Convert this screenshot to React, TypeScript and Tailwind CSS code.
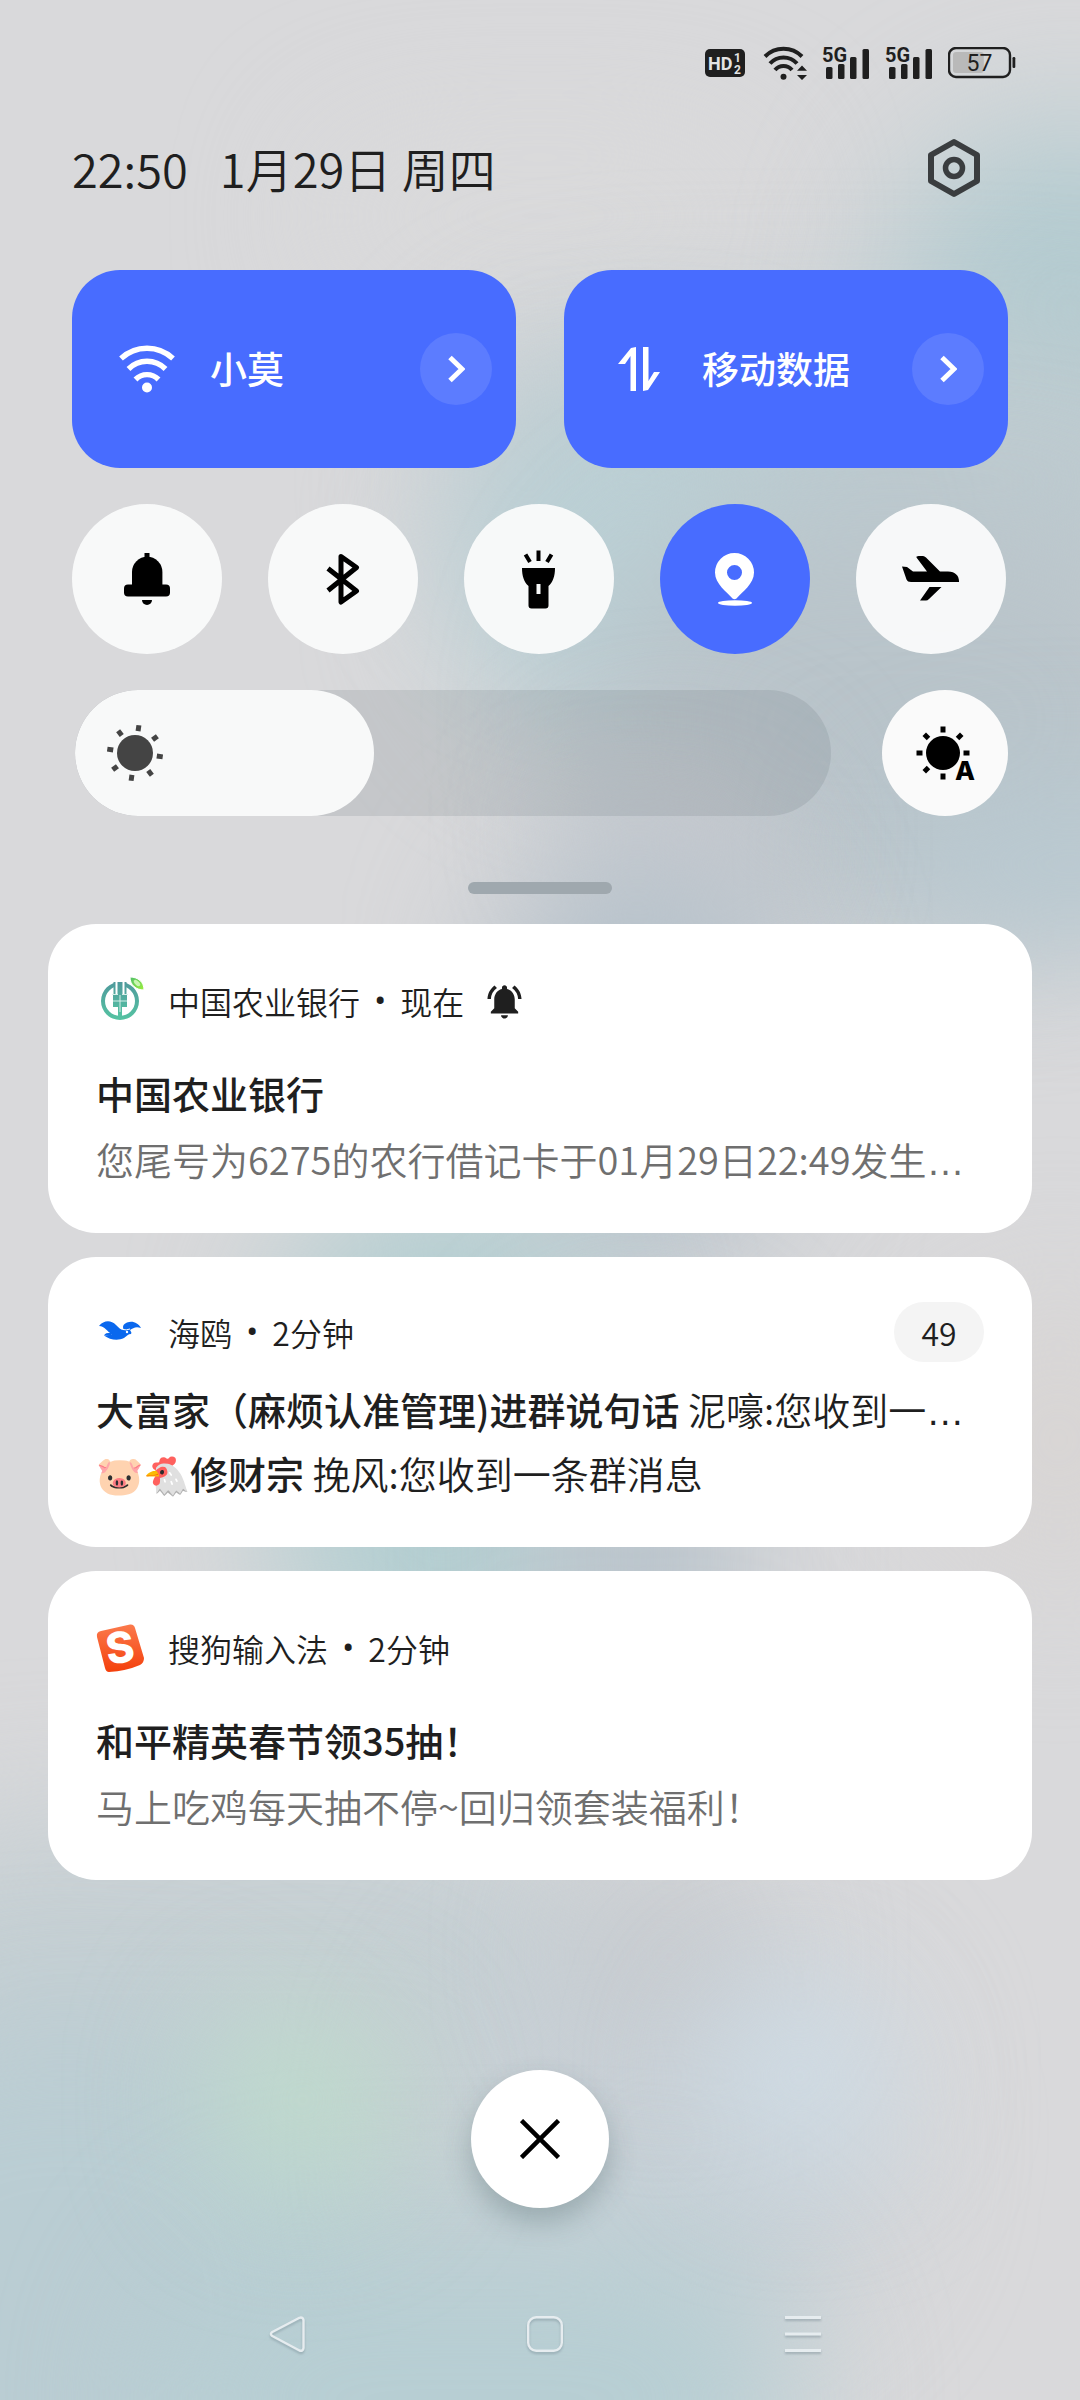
import { useState } from 'react';
import type { ReactNode } from 'react';
import { MdNotificationsActive } from 'react-icons/md';

/* ---------- wallpaper ---------- */

const BLOBS = [
  'left-[30%] top-[6%] h-[6%] w-[40%] bg-[#dadadb]',
  'right-[-16%] top-[5%] h-[16%] w-[34%] bg-[#b3cbd0]',
  'right-[-12%] top-[14%] h-[12%] w-[70%] bg-[#becbd0]',
  'left-[42%] top-[17%] h-[14%] w-[34%] bg-[#bbd1d6]',
  'right-[-12%] top-[21%] h-[18%] w-[58%] bg-[#b9c4ca]',
  'right-[-16%] top-[33%] h-[6%] w-[34%] bg-[#b8c9d1]',
  'left-[54%] top-[32%] h-[6%] w-[18%] bg-[#d0cdd2]',
  'left-[46%] top-[35%] h-[18%] w-[26%] bg-[#b5c1ca]',
  'right-[-10%] top-[54%] h-[12%] w-[24%] bg-[#d8d5d4]',
  'left-[26%] top-[49%] h-[22%] w-[30%] bg-[#b3ced1]',
  'left-[50%] top-[56%] h-[16%] w-[18%] bg-[#b9c3cb]',
  'left-[-20%] top-[76%] h-[20%] w-[80%] bg-[#c5cfd3]',
  'left-[-24%] top-[84%] h-[24%] w-[60%] bg-[#bacdd3]',
  'left-[40%] top-[80%] h-[18%] w-[42%] bg-[#c8d0d6]',
  'left-[14%] top-[93%] h-[14%] w-[60%] bg-[#b7ced3]',
  'left-[54%] top-[78%] h-[7%] w-[16%] bg-[#c6c9cd]',
  'left-[20%] top-[84%] h-[7%] w-[16%] bg-[#bfe0cb]',
  'left-[66%] top-[83%] h-[7%] w-[16%] bg-[#d2e0ea]',
];

function Wallpaper() {
  return (
    <div aria-hidden="true" className="absolute inset-0 -z-10 overflow-hidden bg-[#d9d9db]">
      {BLOBS.map((blob) => (
        <div key={blob} className={`absolute rounded-full blur-[70px] ${blob}`} />
      ))}
    </div>
  );
}

/* ---------- status bar ---------- */

function HdBadge() {
  return (
    <svg width="40" height="28" viewBox="0 0 40 28" aria-label="HD 1 2" role="img" className="mr-[3px]">
      <rect width="40" height="28" rx="5" fill="#1f1f1f" />
      <text x="3" y="21" fontSize="18" fontWeight="700" fill="#e4e4e4" className="font-['Roboto',sans-serif]">
        HD
      </text>
      <text x="29" y="13" fontSize="12" fontWeight="700" fill="#e4e4e4" className="font-['Roboto',sans-serif]">
        1
      </text>
      <text x="29" y="25" fontSize="12" fontWeight="700" fill="#e4e4e4" className="font-['Roboto',sans-serif]">
        2
      </text>
    </svg>
  );
}

function StatusWifi() {
  return (
    <svg width="44" height="34" viewBox="0 0 44 34" fill="none" stroke="#1f1f1f" strokeWidth="4" aria-label="Wi-Fi" role="img">
      <path d="M2 10.500A26 26 0 0 1 39 10.500" />
      <path d="M7 17.500A18 18 0 0 1 34 17.500" />
      <path d="M12 24A11 11 0 0 1 29 24" />
      <circle cx="20.500" cy="30.700" r="3" fill="#1f1f1f" stroke="none" />
      <path d="M39 19.500l5 5.300H34zM39 34l5-5H34z" fill="#1f1f1f" stroke="none" />
    </svg>
  );
}

function Signal() {
  return (
    <svg width="48" height="45" viewBox="0 -6 48 45" fill="#1f1f1f" aria-label="5G" role="img">
      <text x="0" y="15" fontSize="20" fontWeight="700" className="font-['Roboto',sans-serif]">
        5G
      </text>
      <rect x="4" y="20" width="6.500" height="12" rx="1.500" />
      <rect x="16" y="17" width="6.500" height="15" rx="1.500" />
      <rect x="28" y="10" width="6.500" height="22" rx="1.500" />
      <rect x="40.500" y="2" width="6.500" height="30" rx="1.500" />
    </svg>
  );
}

function Battery({ level }: { level: number }) {
  return (
    <svg width="68" height="32" viewBox="0 0 68 32" aria-label={`${level}%`} role="img">
      <rect x="1" y="1" width="61" height="29" rx="7" fill="none" stroke="#1f1f1f" strokeWidth="2.400" />
      <rect x="5" y="5" width={(54 * level) / 100} height="21" rx="3" fill="#b9b9b9" />
      <rect x="64.500" y="10" width="2.800" height="11" rx="1.200" fill="#1f1f1f" />
      <text x="31.500" y="23.500" textAnchor="middle" fontSize="23" fill="#1f1f1f" className="font-['Roboto',sans-serif]">
        {level}
      </text>
    </svg>
  );
}

function StatusBar() {
  return (
    <div className="flex h-[126px] items-center justify-end gap-[15px] pr-16">
      <HdBadge />
      <StatusWifi />
      <Signal />
      <Signal />
      <Battery level={57} />
    </div>
  );
}

/* ---------- quick settings ---------- */

function SettingsIcon() {
  return (
    <svg width="54" height="60" viewBox="0 0 54 60" fill="none" stroke="#3a3d3f" strokeWidth="6" strokeLinejoin="round">
      <path d="M27 4L50 17V43L27 56L4 43V17Z" />
      <circle cx="27" cy="30" r="8.500" strokeWidth="5.500" />
    </svg>
  );
}

function WifiIcon() {
  return (
    <svg width="56" height="48" viewBox="0 0 56 48" fill="none" stroke="#fff" strokeWidth="5.400">
      <path d="M2 13.500A38 38 0 0 1 54 13.500" />
      <path d="M9.500 24A26 26 0 0 1 46.500 24" />
      <path d="M16.500 34.500A16 16 0 0 1 39.500 34.500" />
      <circle cx="28" cy="42.500" r="5" fill="#fff" stroke="none" />
    </svg>
  );
}

function DataIcon() {
  return (
    <svg width="56" height="48" viewBox="0 0 56 48" fill="#fff">
      <path d="M7 19L20 3L25 2V46H19.500V11L14 19Z" />
      <path d="M32 2H37.500V36L43 27H49L37 45L32 46Z" />
    </svg>
  );
}

function BellIcon() {
  return (
    <svg width="46" height="53" viewBox="0 0 46 53">
      <rect x="20.500" width="5" height="6" />
      <path d="M8 33V19a15.200 15.200 0 0 1 30.400 0V33Z" />
      <rect y="31.500" width="46" height="12" rx="4" />
      <path d="M18 47h10a5 5 0 0 1-10 0z" />
    </svg>
  );
}

function BluetoothIcon() {
  return (
    <svg width="34" height="51" viewBox="0 0 34 51" fill="none" stroke="#000" strokeWidth="5" strokeLinejoin="round">
      <path d="M2 14.500L30.500 37L15 48V2.500L30.500 13.500L2 36.500" />
    </svg>
  );
}

function TorchIcon() {
  return (
    <svg width="34" height="59" viewBox="0 0 34 59">
      <path fillRule="evenodd" d="M0 18H33C33 26 31 32 26.500 36V55.500a3 3 0 0 1-3 3H9.500a3 3 0 0 1-3-3V36C2 32 0 26 0 18ZM14.500 34V44H18.500V34Z" />
      <path d="M16.500 .5V11M3.500 4.500L8 12M29.500 4.500L25 12" stroke="#000" strokeWidth="4" />
    </svg>
  );
}

function PinIcon() {
  return (
    <svg width="40" height="53" viewBox="0 0 40 53" fill="#fff">
      <path
        fillRule="evenodd"
        d="M19.500 0A19.500 19.500 0 0 1 39 19.500C39 31 27 39 21.500 45.500Q19.500 47 17.500 45.500C12 39 0 31 0 19.500A19.500 19.500 0 0 1 19.500 0ZM19.500 12a7.500 7.500 0 1 0 0 15a7.500 7.500 0 1 0 0-15Z"
      />
      <ellipse cx="20" cy="50" rx="17" ry="2.700" />
    </svg>
  );
}

function PlaneIcon() {
  return (
    <svg width="58" height="46" viewBox="0 0 58 46">
      <path d="M0 10.500L5 11L11 15.500H25L14.500 1.500Q14 0 16.500 0H21Q22.500 0 24 1.500L38 15.500H46Q57 16 57 26H9Q5.500 26 4.500 23.500Z" />
      <path d="M27.500 31H39.500L27 43Q25.500 44.500 24 44.500H18Z" />
    </svg>
  );
}

function Sun({ cx, cy, r, orbit, angles }: { cx: number; cy: number; r: number; orbit: number; angles: number[] }) {
  return (
    <>
      <circle cx={cx} cy={cy} r={r} />
      {angles.map((a) => (
        <rect key={a} x={cx - 2.5} y={cy - orbit - 3} width="5" height="6" transform={`rotate(${a} ${cx} ${cy})`} />
      ))}
    </>
  );
}

function Chevron() {
  return (
    <svg width="18" height="28" viewBox="0 0 18 28" fill="none" stroke="#fff" strokeWidth="5">
      <path d="M3 2.500L15 14L3 25.500" />
    </svg>
  );
}

function WideTile({ label, icon }: { label: string; icon: ReactNode }) {
  return (
    <div className="flex h-[198px] flex-1 items-center rounded-[48px] bg-[#486cff] pr-6 pl-[47px]">
      <button type="button" aria-pressed="true" className="flex h-full flex-1 items-center gap-[35px] text-[37px] leading-[48px] font-medium text-white">
        {icon}
        <span className="pb-[3px]">{label}</span>
      </button>
      <button type="button" aria-label={`${label} 详情`} className="grid size-[72px] place-items-center rounded-full bg-[#5c7cff]">
        <Chevron />
      </button>
    </div>
  );
}

const TOGGLES = [
  { name: '响铃', icon: <BellIcon />, on: false },
  { name: '蓝牙', icon: <BluetoothIcon />, on: false },
  { name: '手电筒', icon: <TorchIcon />, on: false },
  { name: '定位', icon: <PinIcon />, on: true },
  { name: '飞行模式', icon: <PlaneIcon />, on: false },
];

const MAX_LEVEL = 255;

function Brightness() {
  const [value, setValue] = useState(101);
  return (
    <div className="mt-9 flex items-center gap-[51px] pl-[3px]">
      <div className="relative h-[126px] flex-1 overflow-hidden rounded-full bg-[#5a646a]/15">
        <div className="flex h-full items-center rounded-full bg-[#f8f9f9] pl-[30px]" style={{ width: `${(value / MAX_LEVEL) * 100}%` }}>
          <svg width="60" height="60" viewBox="0 0 60 60" fill="#444">
            <Sun cx={30} cy={30} r={18} orbit={25} angles={[8, 53, 98, 143, 188, 233, 278, 323]} />
          </svg>
        </div>
        <input
          type="range"
          aria-label="亮度"
          max={MAX_LEVEL}
          value={value}
          onChange={(e) => setValue(Number(e.target.value))}
          className="absolute inset-0 h-full w-full opacity-0"
        />
      </div>
      <button type="button" aria-label="自动亮度" className="grid size-[126px] place-items-center rounded-full bg-[#fafafa]">
        <svg width="64" height="76" viewBox="0 -8 64 76">
          <Sun cx={30} cy={30} r={17} orbit={23.5} angles={[0, 45, 90, 180, 225, 270, 315]} />
          <text x="42" y="57" fontSize="26" fontWeight="800" className="font-['Inter',sans-serif]">
            A
          </text>
        </svg>
      </button>
    </div>
  );
}

function QuickSettings() {
  return (
    <section className="px-[72px]">
      <header className="flex h-[84px] items-center justify-between pr-[27px]">
        <p className="flex gap-8 text-[47px] leading-[64px] font-[350]">
          <time>22:50</time>
          <span>1月29日 周四</span>
        </p>
        <button type="button" aria-label="设置">
          <SettingsIcon />
        </button>
      </header>
      <div className="mt-[60px] flex gap-12">
        <WideTile label="小莫" icon={<WifiIcon />} />
        <WideTile label="移动数据" icon={<DataIcon />} />
      </div>
      <div className="mt-9 flex gap-[46px]">
        {TOGGLES.map(({ name, icon, on }) => (
          <button
            key={name}
            type="button"
            aria-label={name}
            aria-pressed={on}
            className={`grid size-[150px] place-items-center rounded-full ${on ? 'bg-[#486cff]' : 'bg-[#fafbfb]/95'}`}
          >
            {icon}
          </button>
        ))}
      </div>
      <Brightness />
    </section>
  );
}

/* ---------- notifications ---------- */

function BankLogo() {
  return (
    <svg width="48" height="48" viewBox="0 0 48 48">
      <defs>
        <linearGradient id="bank" x1="0" y1="0" x2="0" y2="1">
          <stop offset="0" stopColor="#4f9a9c" />
          <stop offset="1" stopColor="#55c3a2" />
        </linearGradient>
        <linearGradient id="leaf" x1="0" y1="0" x2="1" y2="1">
          <stop offset="0" stopColor="#4fbf6a" />
          <stop offset="1" stopColor="#9df03c" />
        </linearGradient>
      </defs>
      <g fill="url(#bank)">
        <path fillRule="evenodd" d="M24 5A19 19 0 1 0 24 43A19 19 0 1 0 24 5ZM24 9A15 15 0 1 1 24 39A15 15 0 1 1 24 9Z" />
        <path d="M17.500 5H30.500V18H31V30H26V39H22V30H17V18H17.500Z" />
      </g>
      <path d="M20.500 4V17.500M27.500 4V17.500" stroke="#fff" strokeWidth="2" />
      <path d="M16 17.500H22M26 17.500H32M17 24H31M24 18V35" stroke="#d5efe8" strokeWidth="1" />
      <path d="M34 0C42 0 48 5 48 13C40 13 34 8 34 0Z" fill="url(#leaf)" stroke="#fff" strokeWidth="1" />
      <ellipse cx="41" cy="6" rx="4" ry="2" fill="#c9f5b0" transform="rotate(45 41 6)" />
    </svg>
  );
}

function GullLogo() {
  return (
    <svg width="48" height="48" viewBox="0 0 48 48" fill="#0a68ee">
      <path d="M3 18C8 12 15 12 20 17C23 20 25 22 28 22C26 19 27 16 31 14.500C37 12.500 42 15 45 20C40 18 37 20 34 22C35 24 36 24.500 35 26C32 26 31 28 28 30C22 33 14 32 8 27.500C12 28 14 27.500 16 26C11 24 9 18 3 18Z" />
      <path d="M8 27.500C9 25 13 24.500 17 25L14 28Z" />
      <path d="M27 21.500Q30 22.500 34 21" fill="none" stroke="#fff" strokeWidth="1" />
      <circle cx="31" cy="24" r="1.200" fill="#fff" />
    </svg>
  );
}

function SogouLogo() {
  return (
    <svg width="64" height="64" viewBox="-8 -8 64 64" className="-m-2">
      <defs>
        <linearGradient id="sogou" x1="0" y1="0" x2="0" y2="1">
          <stop offset="0" stopColor="#fb7a4c" />
          <stop offset="1" stopColor="#f4400c" />
        </linearGradient>
      </defs>
      <path d="M5 7L34 .5Q38 0 39 4L48 34Q48 39 44 41Q30 47 13 48Q10 48 9 44L1 13Q0 8 5 7Z" fill="url(#sogou)" />
      <text
        x="24"
        y="39"
        textAnchor="middle"
        fontSize="43"
        fontWeight="800"
        fill="#fff"
        transform="rotate(-8 24 24)"
        className="font-['Inter',sans-serif]"
      >
        S
      </text>
    </svg>
  );
}

function CardHeader({ logo, app, time, children }: { logo: ReactNode; app: string; time: string; children?: ReactNode }) {
  return (
    <header className="flex h-[60px] items-center text-[32px] leading-[48px] font-[350]">
      {logo}
      <span className="ml-6">{app}</span>
      <span className="mx-[14px] font-['Roboto',sans-serif] text-[38px]">•</span>
      <span>{time}</span>
      {children}
    </header>
  );
}

function Card({ children }: { children: ReactNode }) {
  return <article className="rounded-[48px] bg-white px-12 text-[#1f1f1f]">{children}</article>;
}

// widely spaced dots that sit on the baseline
function Ellipsis() {
  return <span className="font-['Liberation_Sans',sans-serif] leading-none">…</span>;
}

function MessageCard({ header, title, body, cut }: { header: ReactNode; title: string; body: string; cut?: boolean }) {
  return (
    <Card>
      <div className="pt-[47px] pb-[41px]">
        {header}
        <h2 className="mt-[29px] text-[38px] leading-[66px] font-medium">{title}</h2>
        <p className="overflow-hidden text-[38px] leading-[66px] font-[350] whitespace-nowrap text-[#6f6f6f]">
          {body}
          {cut ? <Ellipsis /> : null}
        </p>
      </div>
    </Card>
  );
}

const CHATS = [
  { group: '大富家（麻烦认准管理)进群说句话', text: '泥嚎:您收到一', cut: true },
  { group: '🐷🐔修财宗', text: '挽风:您收到一条群消息', cut: false },
];

function Notifications() {
  return (
    <main className="mt-[30px] flex flex-col gap-6 px-12">
      <MessageCard
        header={
          <CardHeader logo={<BankLogo />} app="中国农业银行" time="现在">
            <MdNotificationsActive className="ml-5 size-[41px]" />
          </CardHeader>
        }
        title="中国农业银行"
        body="您尾号为6275的农行借记卡于01月29日22:49发生"
        cut
      />
      <Card>
        <div className="pt-[45px] pb-[42px]">
          <CardHeader logo={<GullLogo />} app="海鸥" time="2分钟">
            <span className="ml-auto grid h-[60px] w-[90px] place-items-center rounded-full bg-[#f4f4f4]">49</span>
          </CardHeader>
          <ul className="mt-[15px] text-[38px] leading-[64px]">
            {CHATS.map(({ group, text, cut }) => (
              <li key={group} className="overflow-hidden font-[350] whitespace-nowrap">
                <b className="leading-none font-medium">{group} </b>
                {text}
                {cut ? <Ellipsis /> : null}
              </li>
            ))}
          </ul>
        </div>
      </Card>
      <MessageCard
        header={<CardHeader logo={<SogouLogo />} app="搜狗输入法" time="2分钟" />}
        title="和平精英春节领35抽！"
        body="马上吃鸡每天抽不停~回归领套装福利！"
      />
    </main>
  );
}

/* ---------- bottom ---------- */

function NavBar() {
  return (
    <nav className="mt-auto flex justify-center gap-[222px] pb-12 pl-[10px] [&_svg]:drop-shadow-[0_2px_1px_rgba(90,110,120,0.35)]">
      <button type="button" aria-label="返回">
        <svg width="36" height="36" viewBox="0 0 36 36" fill="none" stroke="#e6ecef" strokeWidth="2.400" strokeLinejoin="round">
          <path d="M30.500 1.800L2.800 16.300Q1 18 2.800 19.700L30.500 34.500Q34 35.500 34.500 32V4Q34 .8 30.500 1.800Z" />
        </svg>
      </button>
      <button type="button" aria-label="主页">
        <svg width="36" height="36" viewBox="0 0 36 36" fill="none" stroke="#e6ecef" strokeWidth="2.400">
          <rect x="1.200" y="1.200" width="33.600" height="33.600" rx="8" />
        </svg>
      </button>
      <button type="button" aria-label="最近任务">
        <svg width="36" height="36" viewBox="0 0 36 36" fill="none" stroke="#e6ecef" strokeWidth="3">
          <path d="M0 1.500H36M0 18H36M0 34.500H36" />
        </svg>
      </button>
    </nav>
  );
}

export default function App() {
  return (
    <div className="relative isolate flex min-h-screen flex-col font-['Noto_Sans_CJK_SC',sans-serif] text-[#1f1f1f]">
      <Wallpaper />
      <StatusBar />
      <QuickSettings />
      <div className="mx-auto mt-[66px] h-3 w-36 rounded-full bg-[#9fa8ae]" />
      <Notifications />
      <button
        type="button"
        aria-label="清除全部"
        className="mx-auto mt-[190px] mb-12 grid size-[138px] shrink-0 place-items-center rounded-full bg-white shadow-[0_14px_28px_rgba(60,85,90,0.3)]"
      >
        <svg width="40" height="40" viewBox="0 0 40 40" stroke="#000" strokeWidth="4.500">
          <path d="M1.500 1.500L38.500 38.500M38.500 1.500L1.500 38.500" />
        </svg>
      </button>
      <NavBar />
    </div>
  );
}
